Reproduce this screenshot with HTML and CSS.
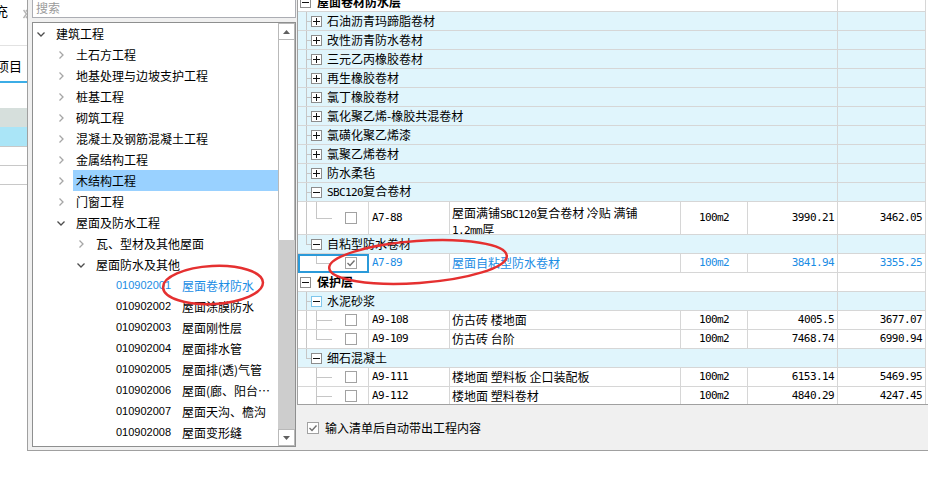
FILE: index.html
```html
<!DOCTYPE html>
<html lang="zh-CN">
<head>
<meta charset="utf-8">
<title>清单指引</title>
<link rel="stylesheet" href="styles.css">
</head>
<body>
<div class="screen">
  <aside class="side">
    <div class="side-top"><span class="cut">充</span><svg class="more" width="6" height="10" viewBox="0 0 6 10"><path d="M0.5 1 3.5 5 0.5 9M3 1 6 5 3 9"/></svg></div>
    <div class="side-tab"><span>项目</span></div>
    <div class="side-gap"></div>
    <div class="side-row gray"></div>
    <div class="side-row blue"></div>
    <div class="side-row line"></div>
    <div class="side-row line"></div>
  </aside>

  <section class="dialog">
    <div class="left">
      <div class="search">搜索</div>
      <div class="tree-box">
        <ul class="tree">
          <li class="row l0"><svg class="chev open" viewBox="0 0 8 8"><path d="M0.5 2.5 4 6 7.5 2.5"/></svg><span class="label">建筑工程</span></li>
          <li class="row l1"><svg class="chev" viewBox="0 0 8 8"><path d="M2.5 0.5 6 4 2.5 7.5"/></svg><span class="label">土石方工程</span></li>
          <li class="row l1"><svg class="chev" viewBox="0 0 8 8"><path d="M2.5 0.5 6 4 2.5 7.5"/></svg><span class="label">地基处理与边坡支护工程</span></li>
          <li class="row l1"><svg class="chev" viewBox="0 0 8 8"><path d="M2.5 0.5 6 4 2.5 7.5"/></svg><span class="label">桩基工程</span></li>
          <li class="row l1"><svg class="chev" viewBox="0 0 8 8"><path d="M2.5 0.5 6 4 2.5 7.5"/></svg><span class="label">砌筑工程</span></li>
          <li class="row l1"><svg class="chev" viewBox="0 0 8 8"><path d="M2.5 0.5 6 4 2.5 7.5"/></svg><span class="label">混凝土及钢筋混凝土工程</span></li>
          <li class="row l1"><svg class="chev" viewBox="0 0 8 8"><path d="M2.5 0.5 6 4 2.5 7.5"/></svg><span class="label">金属结构工程</span></li>
          <li class="row l1 sel"><svg class="chev" viewBox="0 0 8 8"><path d="M2.5 0.5 6 4 2.5 7.5"/></svg><span class="label">木结构工程</span></li>
          <li class="row l1"><svg class="chev" viewBox="0 0 8 8"><path d="M2.5 0.5 6 4 2.5 7.5"/></svg><span class="label">门窗工程</span></li>
          <li class="row l1"><svg class="chev open" viewBox="0 0 8 8"><path d="M0.5 2.5 4 6 7.5 2.5"/></svg><span class="label">屋面及防水工程</span></li>
          <li class="row l2"><svg class="chev" viewBox="0 0 8 8"><path d="M2.5 0.5 6 4 2.5 7.5"/></svg><span class="label">瓦、型材及其他屋面</span></li>
          <li class="row l2"><svg class="chev open" viewBox="0 0 8 8"><path d="M0.5 2.5 4 6 7.5 2.5"/></svg><span class="label">屋面防水及其他</span></li>
          <li class="row l3 link"><span class="code">010902001</span><span class="label">屋面卷材防水</span></li>
          <li class="row l3"><span class="code">010902002</span><span class="label">屋面涂膜防水</span></li>
          <li class="row l3"><span class="code">010902003</span><span class="label">屋面刚性层</span></li>
          <li class="row l3"><span class="code">010902004</span><span class="label">屋面排水管</span></li>
          <li class="row l3"><span class="code">010902005</span><span class="label">屋面排(透)气管</span></li>
          <li class="row l3"><span class="code">010902006</span><span class="label">屋面(廊、阳台…</span></li>
          <li class="row l3"><span class="code">010902007</span><span class="label">屋面天沟、檐沟</span></li>
          <li class="row l3"><span class="code">010902008</span><span class="label">屋面变形缝</span></li>
        </ul>
        <div class="vscroll">
          <div class="sbtn"><svg viewBox="0 0 7 4"><path d="M0 4 3.5 0 7 4Z"/></svg></div>
          <div class="thumb"></div>
          <div class="track"></div>
          <div class="sbtn"><svg viewBox="0 0 7 4"><path d="M0 0 3.5 4 7 0Z"/></svg></div>
        </div>
      </div>
    </div>

    <div class="right">
      <div class="grid">
        <div class="rows">
          <div class="tr top"><div class="span"><svg class="box"><rect x="0.5" y="0.5" width="10" height="10"/><path d="M2 5.5H9"/></svg><span class="label">屋面卷材防水层</span></div><div></div></div>

          <div class="tr group"><div class="span"><svg class="g" width="13" height="18"><path d="M8.5 0V18M9 9.5H13"/></svg><svg class="box"><rect x="0.5" y="0.5" width="10" height="10"/><path d="M2 5.5H9M5.5 2V9"/></svg><span class="label">石油沥青玛蹄脂卷材</span></div><div></div></div>
          <div class="tr group"><div class="span"><svg class="g" width="13" height="18"><path d="M8.5 0V18M9 9.5H13"/></svg><svg class="box"><rect x="0.5" y="0.5" width="10" height="10"/><path d="M2 5.5H9M5.5 2V9"/></svg><span class="label">改性沥青防水卷材</span></div><div></div></div>
          <div class="tr group"><div class="span"><svg class="g" width="13" height="18"><path d="M8.5 0V18M9 9.5H13"/></svg><svg class="box"><rect x="0.5" y="0.5" width="10" height="10"/><path d="M2 5.5H9M5.5 2V9"/></svg><span class="label">三元乙丙橡胶卷材</span></div><div></div></div>
          <div class="tr group"><div class="span"><svg class="g" width="13" height="18"><path d="M8.5 0V18M9 9.5H13"/></svg><svg class="box"><rect x="0.5" y="0.5" width="10" height="10"/><path d="M2 5.5H9M5.5 2V9"/></svg><span class="label">再生橡胶卷材</span></div><div></div></div>
          <div class="tr group"><div class="span"><svg class="g" width="13" height="18"><path d="M8.5 0V18M9 9.5H13"/></svg><svg class="box"><rect x="0.5" y="0.5" width="10" height="10"/><path d="M2 5.5H9M5.5 2V9"/></svg><span class="label">氯丁橡胶卷材</span></div><div></div></div>
          <div class="tr group"><div class="span"><svg class="g" width="13" height="18"><path d="M8.5 0V18M9 9.5H13"/></svg><svg class="box"><rect x="0.5" y="0.5" width="10" height="10"/><path d="M2 5.5H9M5.5 2V9"/></svg><span class="label">氯化聚乙烯-橡胶共混卷材</span></div><div></div></div>
          <div class="tr group"><div class="span"><svg class="g" width="13" height="18"><path d="M8.5 0V18M9 9.5H13"/></svg><svg class="box"><rect x="0.5" y="0.5" width="10" height="10"/><path d="M2 5.5H9M5.5 2V9"/></svg><span class="label">氯磺化聚乙烯漆</span></div><div></div></div>
          <div class="tr group"><div class="span"><svg class="g" width="13" height="18"><path d="M8.5 0V18M9 9.5H13"/></svg><svg class="box"><rect x="0.5" y="0.5" width="10" height="10"/><path d="M2 5.5H9M5.5 2V9"/></svg><span class="label">氯聚乙烯卷材</span></div><div></div></div>
          <div class="tr group"><div class="span"><svg class="g" width="13" height="18"><path d="M8.5 0V18M9 9.5H13"/></svg><svg class="box"><rect x="0.5" y="0.5" width="10" height="10"/><path d="M2 5.5H9M5.5 2V9"/></svg><span class="label">防水柔毡</span></div><div></div></div>
          <div class="tr group"><div class="span"><svg class="g" width="13" height="18"><path d="M8.5 0V18M9 9.5H13"/></svg><svg class="box"><rect x="0.5" y="0.5" width="10" height="10"/><path d="M2 5.5H9"/></svg><span class="label"><span class="mono">SBC120</span>复合卷材</span></div><div></div></div>

          <div class="tr tall">
            <div class="c0"><svg class="g" width="40" height="32"><path d="M8.5 0V32M18.5 0V16.5M19 16.5H34"/></svg><span class="cb"></span></div>
            <div class="c1">A7-88</div>
            <div class="c2"><span>屋面满铺<span class="mono">SBC120</span>复合卷材 冷贴 满铺<br><span class="mono">1.2mm</span>厚</span></div>
            <div class="c3">100m2</div>
            <div class="c4">3990.21</div>
            <div class="c5">3462.05</div>
          </div>

          <div class="tr group"><div class="span"><svg class="g" width="13" height="18"><path d="M8.5 0V9.5M9 9.5H13"/></svg><svg class="box"><rect x="0.5" y="0.5" width="10" height="10"/><path d="M2 5.5H9"/></svg><span class="label">自粘型防水卷材</span></div><div></div></div>

          <div class="tr cur">
            <div class="c0"><svg class="g" width="40" height="18"><path d="M18.5 0V9.5M19 9.5H34"/></svg><span class="cb"><svg viewBox="0 0 10 10"><path d="M1.5 5 4 7.5 8.5 2.5"/></svg></span></div>
            <div class="c1">A7-89</div>
            <div class="c2">屋面自粘型防水卷材</div>
            <div class="c3">100m2</div>
            <div class="c4">3841.94</div>
            <div class="c5">3355.25</div>
          </div>

          <div class="tr top"><div class="span"><svg class="box"><rect x="0.5" y="0.5" width="10" height="10"/><path d="M2 5.5H9"/></svg><span class="label">保护层</span></div><div></div></div>

          <div class="tr group"><div class="span"><svg class="g" width="13" height="18"><path d="M8.5 0V18M9 9.5H13"/></svg><svg class="box hot"><rect x="0.5" y="0.5" width="10" height="10"/><path d="M2 5.5H9"/></svg><span class="label">水泥砂浆</span></div><div></div></div>

          <div class="tr">
            <div class="c0"><svg class="g" width="40" height="18"><path d="M8.5 0V18M18.5 0V18M19 9.5H34"/></svg><span class="cb"></span></div>
            <div class="c1">A9-108</div>
            <div class="c2">仿古砖 楼地面</div>
            <div class="c3">100m2</div>
            <div class="c4">4005.5</div>
            <div class="c5">3677.07</div>
          </div>
          <div class="tr">
            <div class="c0"><svg class="g" width="40" height="18"><path d="M8.5 0V18M18.5 0V9.5M19 9.5H34"/></svg><span class="cb"></span></div>
            <div class="c1">A9-109</div>
            <div class="c2">仿古砖 台阶</div>
            <div class="c3">100m2</div>
            <div class="c4">7468.74</div>
            <div class="c5">6990.94</div>
          </div>

          <div class="tr group"><div class="span"><svg class="g" width="13" height="18"><path d="M8.5 0V9.5M9 9.5H13"/></svg><svg class="box"><rect x="0.5" y="0.5" width="10" height="10"/><path d="M2 5.5H9"/></svg><span class="label">细石混凝土</span></div><div></div></div>

          <div class="tr">
            <div class="c0"><svg class="g" width="40" height="18"><path d="M18.5 0V18M19 9.5H34"/></svg><span class="cb"></span></div>
            <div class="c1">A9-111</div>
            <div class="c2">楼地面 塑料板 企口装配板</div>
            <div class="c3">100m2</div>
            <div class="c4">6153.14</div>
            <div class="c5">5469.95</div>
          </div>
          <div class="tr">
            <div class="c0"><svg class="g" width="40" height="18"><path d="M18.5 0V18M19 9.5H34"/></svg><span class="cb"></span></div>
            <div class="c1">A9-112</div>
            <div class="c2">楼地面 塑料卷材</div>
            <div class="c3">100m2</div>
            <div class="c4">4840.29</div>
            <div class="c5">4247.45</div>
          </div>
        </div>
      </div>
      <label class="bottom"><span class="cb"><svg viewBox="0 0 10 10"><path d="M1.5 5 4 7.5 8.5 2.5"/></svg></span><span>输入清单后自动带出工程内容</span></label>
    </div>
  </section>

  <svg class="marks" width="928" height="488" viewBox="0 0 928 488">
    <ellipse cx="213" cy="285" rx="50" ry="19" transform="rotate(-3 213 285)"/>
    <ellipse cx="418" cy="262" rx="89" ry="21" transform="rotate(-4 418 262)"/>
  </svg>
</div>
</body>
</html>
```

FILE: styles.css
```css
* { box-sizing: border-box; margin: 0; padding: 0; }
html, body { width: 928px; height: 488px; overflow: hidden; background: #fff; }
body { font-family: "Noto Sans CJK SC", "Noto Sans", sans-serif; font-size: 12px; color: #000; }

.screen { position: relative; display: flex; align-items: flex-start; height: 488px; }

/* app strip on the far left */
.side { flex: none; width: 27px; overflow: hidden; }
.side-top { height: 46px; border-bottom: 1px solid #e2e2e2; display: flex; justify-content: space-between; align-items: flex-start; padding-top: 3px; }
.side-top .cut { margin-left: -5px; font-size: 13px; line-height: 16px; }
.side-top .more { margin-top: 6px; margin-right: -2px; fill: none; stroke: #b4b4b4; stroke-width: 1.5; }
.side-tab { height: 37px; border-bottom: 2px solid #3cade6; display: flex; align-items: flex-end; padding-bottom: 7px; }
.side-tab span { margin-left: -4px; font-size: 13px; line-height: 16px; white-space: nowrap; }
.side-gap { height: 25px; }
.side-row { height: 19px; }
.side-row.gray { background: #d6dfdc; }
.side-row.blue { height: 20px; background: #aae5f7; border-bottom: 1px solid #c8c8c8; }
.side-row.line { border-bottom: 1px solid #c8c8c8; }

/* dialog */
.dialog { flex: 1; min-width: 0; height: 451px; display: flex; background: #f0f0f0; border-left: 1px solid #a0a0a0; border-bottom: 1px solid #a0a0a0; }
.left { flex: none; width: 269px; padding: 0 1px 3px 4px; display: flex; flex-direction: column; gap: 4px; }
.search { flex: none; height: 22px; margin-top: -4px; background: #fff; border: 1px solid #abadb3; color: #9b9b9b; padding: 3px 0 0 3px; line-height: 16px; }

.tree-box { flex: none; height: 425px; display: flex; background: #fff; border: 1px solid #8e8f8f; }
.tree { flex: 1; min-width: 0; list-style: none; }
.row { display: flex; align-items: center; height: 21px; line-height: 21px; white-space: nowrap; }
.row.l0 { padding-left: 4px; }
.row.l1 { padding-left: 24px; }
.row.l2 { padding-left: 44px; }
.row.l3 { padding-left: 83px; }
.chev { flex: none; width: 8px; height: 8px; margin-right: 11px; fill: none; stroke: #a6a6a6; stroke-width: 1.3; }
.chev.open { stroke: #4d4d4d; }
.row.sel .label { flex: 1; align-self: stretch; background: #99d1ff; margin-left: -3px; padding-left: 3px; }
.code { flex: none; width: 66px; font-family: "Liberation Sans", sans-serif; font-size: 11px; }
.row.link { color: #1b8de4; }

.vscroll { flex: none; width: 17px; display: flex; flex-direction: column; }
.sbtn { flex: none; height: 17px; display: flex; align-items: center; justify-content: center; background: #fff; border: 1px solid #b9b9b9; }
.sbtn svg { width: 7px; height: 4px; fill: #606060; }
.thumb { flex: none; height: 200px; background: #fff; border-left: 1px solid #b9b9b9; border-right: 1px solid #b9b9b9; }
.track { flex: 1; background: #cdcdcd; }

/* right grid */
.right { flex: 1; min-width: 0; display: flex; flex-direction: column; }
.grid { flex: none; height: 405px; overflow: hidden; background: #fff; border-left: 1px solid #a0a0a0; border-bottom: 1px solid #a0a0a0; }
.rows { margin-top: -7px; }
.tr { display: grid; grid-template-columns: 71px 81px 231px 67px 90px 88px; height: 19px; }
.tr.tall { height: 33px; }
.tr > div { display: flex; align-items: center; min-width: 0; overflow: hidden; white-space: nowrap; line-height: 18px; border-right: 1px solid #d6d6d6; border-bottom: 1px solid #d6d6d6; }
.tr .span { grid-column: 1 / 6; }
.tr.group > div { background: #e0f5fc; }
.tr.top .span { padding-left: 2px; }
.tr.top .label { margin-left: 6px; font-weight: bold; }
.tr.group .label { margin-left: 5px; }

.g { flex: none; fill: none; stroke: #c6c6c6; stroke-width: 1; shape-rendering: crispEdges; }
.box { flex: none; width: 11px; height: 11px; }
.box rect { fill: #fff; stroke: #8d8d8d; shape-rendering: crispEdges; }
.box path { stroke: #111; shape-rendering: crispEdges; }
.box.hot rect { stroke: #7ec6ec; }

.cb { flex: none; width: 12px; height: 12px; border: 1px solid #a2a2a2; background: #fff; display: flex; align-items: center; justify-content: center; }
.cb svg { width: 10px; height: 10px; fill: none; stroke: #707070; stroke-width: 1.4; }
.c0 .cb { margin-left: 7px; }

.mono, .c1, .c3, .c4, .c5 { font-family: "DejaVu Sans Mono", "Liberation Mono", monospace; font-size: 11px; letter-spacing: -0.6px; }
.c1 { padding-left: 3px; }
.c2 { padding-left: 2px; }
.c3 { justify-content: center; }
.c4, .c5 { justify-content: flex-end; padding-right: 3px; }
.tr.tall .c2 { align-items: flex-start; padding-top: 4px; white-space: normal; line-height: 14px; }
.tr.cur > div { color: #1b8de4; }
.tr.cur .c0 { outline: 2px solid #2b9ad9; outline-offset: -2px; }

.bottom { flex: none; height: 45px; display: flex; align-items: center; gap: 6px; padding-left: 10px; }

/* annotation marks */
.marks { position: absolute; left: 0; top: 0; pointer-events: none; }
.marks ellipse { fill: none; stroke: #e53030; stroke-width: 2.5; }
```
